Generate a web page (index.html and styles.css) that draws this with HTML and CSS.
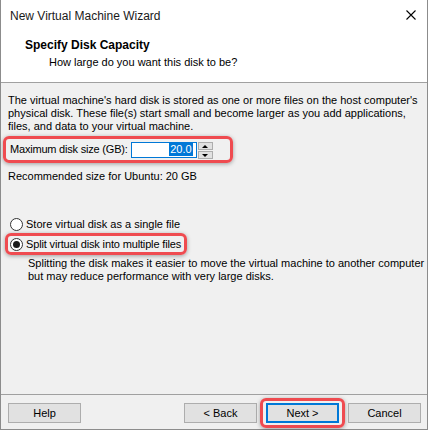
FILE: index.html
```html
<!DOCTYPE html>
<html lang="en">
<head>
  <meta charset="UTF-8">
  <title>New Virtual Machine Wizard</title>
  <link rel="stylesheet" href="styles.css">
</head>
<body>
  <div class="window">
    <div class="titlebar">
      <span class="title">New Virtual Machine Wizard</span>
      <svg class="close" width="10" height="10" viewBox="0 0 10 10">
        <path d="M0.5 0.5 L9.5 9.5 M9.5 0.5 L0.5 9.5" stroke="#000" stroke-width="1.1" fill="none"/>
      </svg>
    </div>

    <div class="header">
      <div class="heading">Specify Disk Capacity</div>
      <div class="subheading">How large do you want this disk to be?</div>
    </div>

    <div class="content">
      <p class="intro">The virtual machine's hard disk is stored as one or more files on the host computer's physical disk. These file(s) start small and become larger as you add applications, files, and data to your virtual machine.</p>

      <div class="mark size-row">
        <label>Maximum disk size (GB):</label>
        <div class="input">
          <span class="selected">20.0</span>
        </div>
        <div class="spinner">
          <div class="spin up"><span class="tri-up"></span></div>
          <div class="spin down"><span class="tri-down"></span></div>
        </div>
      </div>

      <div class="recommended">Recommended size for Ubuntu: 20 GB</div>

      <div class="radio-row first">
        <span class="radio"></span>
        <span>Store virtual disk as a single file</span>
      </div>
      <div class="mark radio-row second">
        <span class="radio checked"></span>
        <span>Split virtual disk into multiple files</span>
      </div>
      <p class="note">Splitting the disk makes it easier to move the virtual machine to another computer but may reduce performance with very large disks.</p>
    </div>

    <div class="footer">
      <button>Help</button>
      <div class="spacer"></div>
      <button>&lt; Back</button>
      <div class="mark next-wrap"><button class="default">Next &gt;</button></div>
      <button>Cancel</button>
    </div>
  </div>
</body>
</html>
```

FILE: styles.css
```css
* {
  box-sizing: border-box;
}

body {
  margin: 0;
  font-family: 'Liberation Sans', Arial, sans-serif;
  font-size: 11px;
  color: #000;
  background: #fff;
}

.window {
  width: 428px;
  height: 430px;
  border: 1px solid #8c8c8c;
  border-top: none;
  display: flex;
  flex-direction: column;
  background: #f0f0f0;
}

.titlebar {
  height: 31px;
  background: #fff;
  display: flex;
  align-items: center;
  padding: 0 11px 0 9px;
}

.title {
  font-size: 12px;
  color: #1a1a1a;
  flex: 1;
}

.close {
  margin-top: -1px;
}

.header {
  height: 52px;
  background: #fff;
  border-bottom: 1px solid #a0a0a0;
  padding: 6px 0 0 24px;
}

.heading {
  font-weight: bold;
  font-size: 12px;
  line-height: 16px;
}

.subheading {
  padding-left: 24px;
  line-height: 16px;
  margin-top: 1px;
}

.content {
  flex: 1;
  padding: 11px 4px 0 7px;
  line-height: 13px;
}

.intro {
  margin: 0;
  padding-right: 3px;
}

.mark {
  border: 3px solid #ef4b50;
  border-radius: 6px;
  box-shadow: 0 1px 4px rgba(0, 0, 0, 0.35);
}

.size-row {
  display: flex;
  align-items: center;
  width: 230px;
  height: 27px;
  margin: 3px 0 0 -5px;
  padding-left: 4px;
}

.size-row label {
  margin-right: 3px;
  letter-spacing: -0.2px;
}

.input {
  width: 66px;
  height: 16px;
  background: #fff;
  border: 1px solid #0078d7;
  display: flex;
  justify-content: flex-end;
  align-items: center;
  padding-right: 3px;
}

.selected {
  background: #0078d7;
  color: #fff;
  line-height: 13px;
  padding: 0 1px;
}

.spinner {
  display: flex;
  flex-direction: column;
  gap: 1px;
  margin-left: 1px;
  margin-top: 2px;
}

.spin {
  width: 15px;
  height: 8px;
  background: #e1e1e1;
  border: 1px solid #adadad;
  display: flex;
  align-items: center;
  justify-content: center;
}

.tri-up {
  border-left: 3px solid transparent;
  border-right: 3px solid transparent;
  border-bottom: 3px solid #000;
}

.tri-down {
  border-left: 3px solid transparent;
  border-right: 3px solid transparent;
  border-top: 3px solid #000;
}

.recommended {
  margin-top: 7px;
}

.radio-row {
  display: flex;
  align-items: center;
  gap: 3px;
  height: 17px;
  white-space: nowrap;
}

.radio-row.first {
  margin-top: 33px;
  padding-left: 2px;
}

.radio-row.second {
  width: fit-content;
  height: 22px;
  margin: 0 0 0 -3px;
  padding: 0 3px 0 2px;
  letter-spacing: -0.15px;
}

.radio {
  width: 13px;
  height: 13px;
  border: 1px solid #333;
  border-radius: 50%;
  background: #fff;
  display: flex;
  align-items: center;
  justify-content: center;
}

.radio.checked::after {
  content: '';
  width: 7px;
  height: 7px;
  border-radius: 50%;
  background: #1a1a1a;
}

.note {
  margin: 2px -14px 0 20px;
}

.footer {
  height: 35px;
  border-top: 1px solid #a0a0a0;
  display: flex;
  align-items: flex-start;
  padding: 8px 6px 0 7px;
  gap: 9px;
}

.spacer {
  flex: 1;
}

button {
  width: 73px;
  height: 20px;
  font-family: 'Liberation Sans', Arial, sans-serif;
  font-size: 11px;
  color: #000;
  background: #e1e1e1;
  border: 1px solid #adadad;
  padding: 0;
}

button.default {
  border: 2px solid #0078d7;
}

.next-wrap {
  margin: -5px -6px 0 -6px;
  padding: 2px 3px;
  display: flex;
}
```
